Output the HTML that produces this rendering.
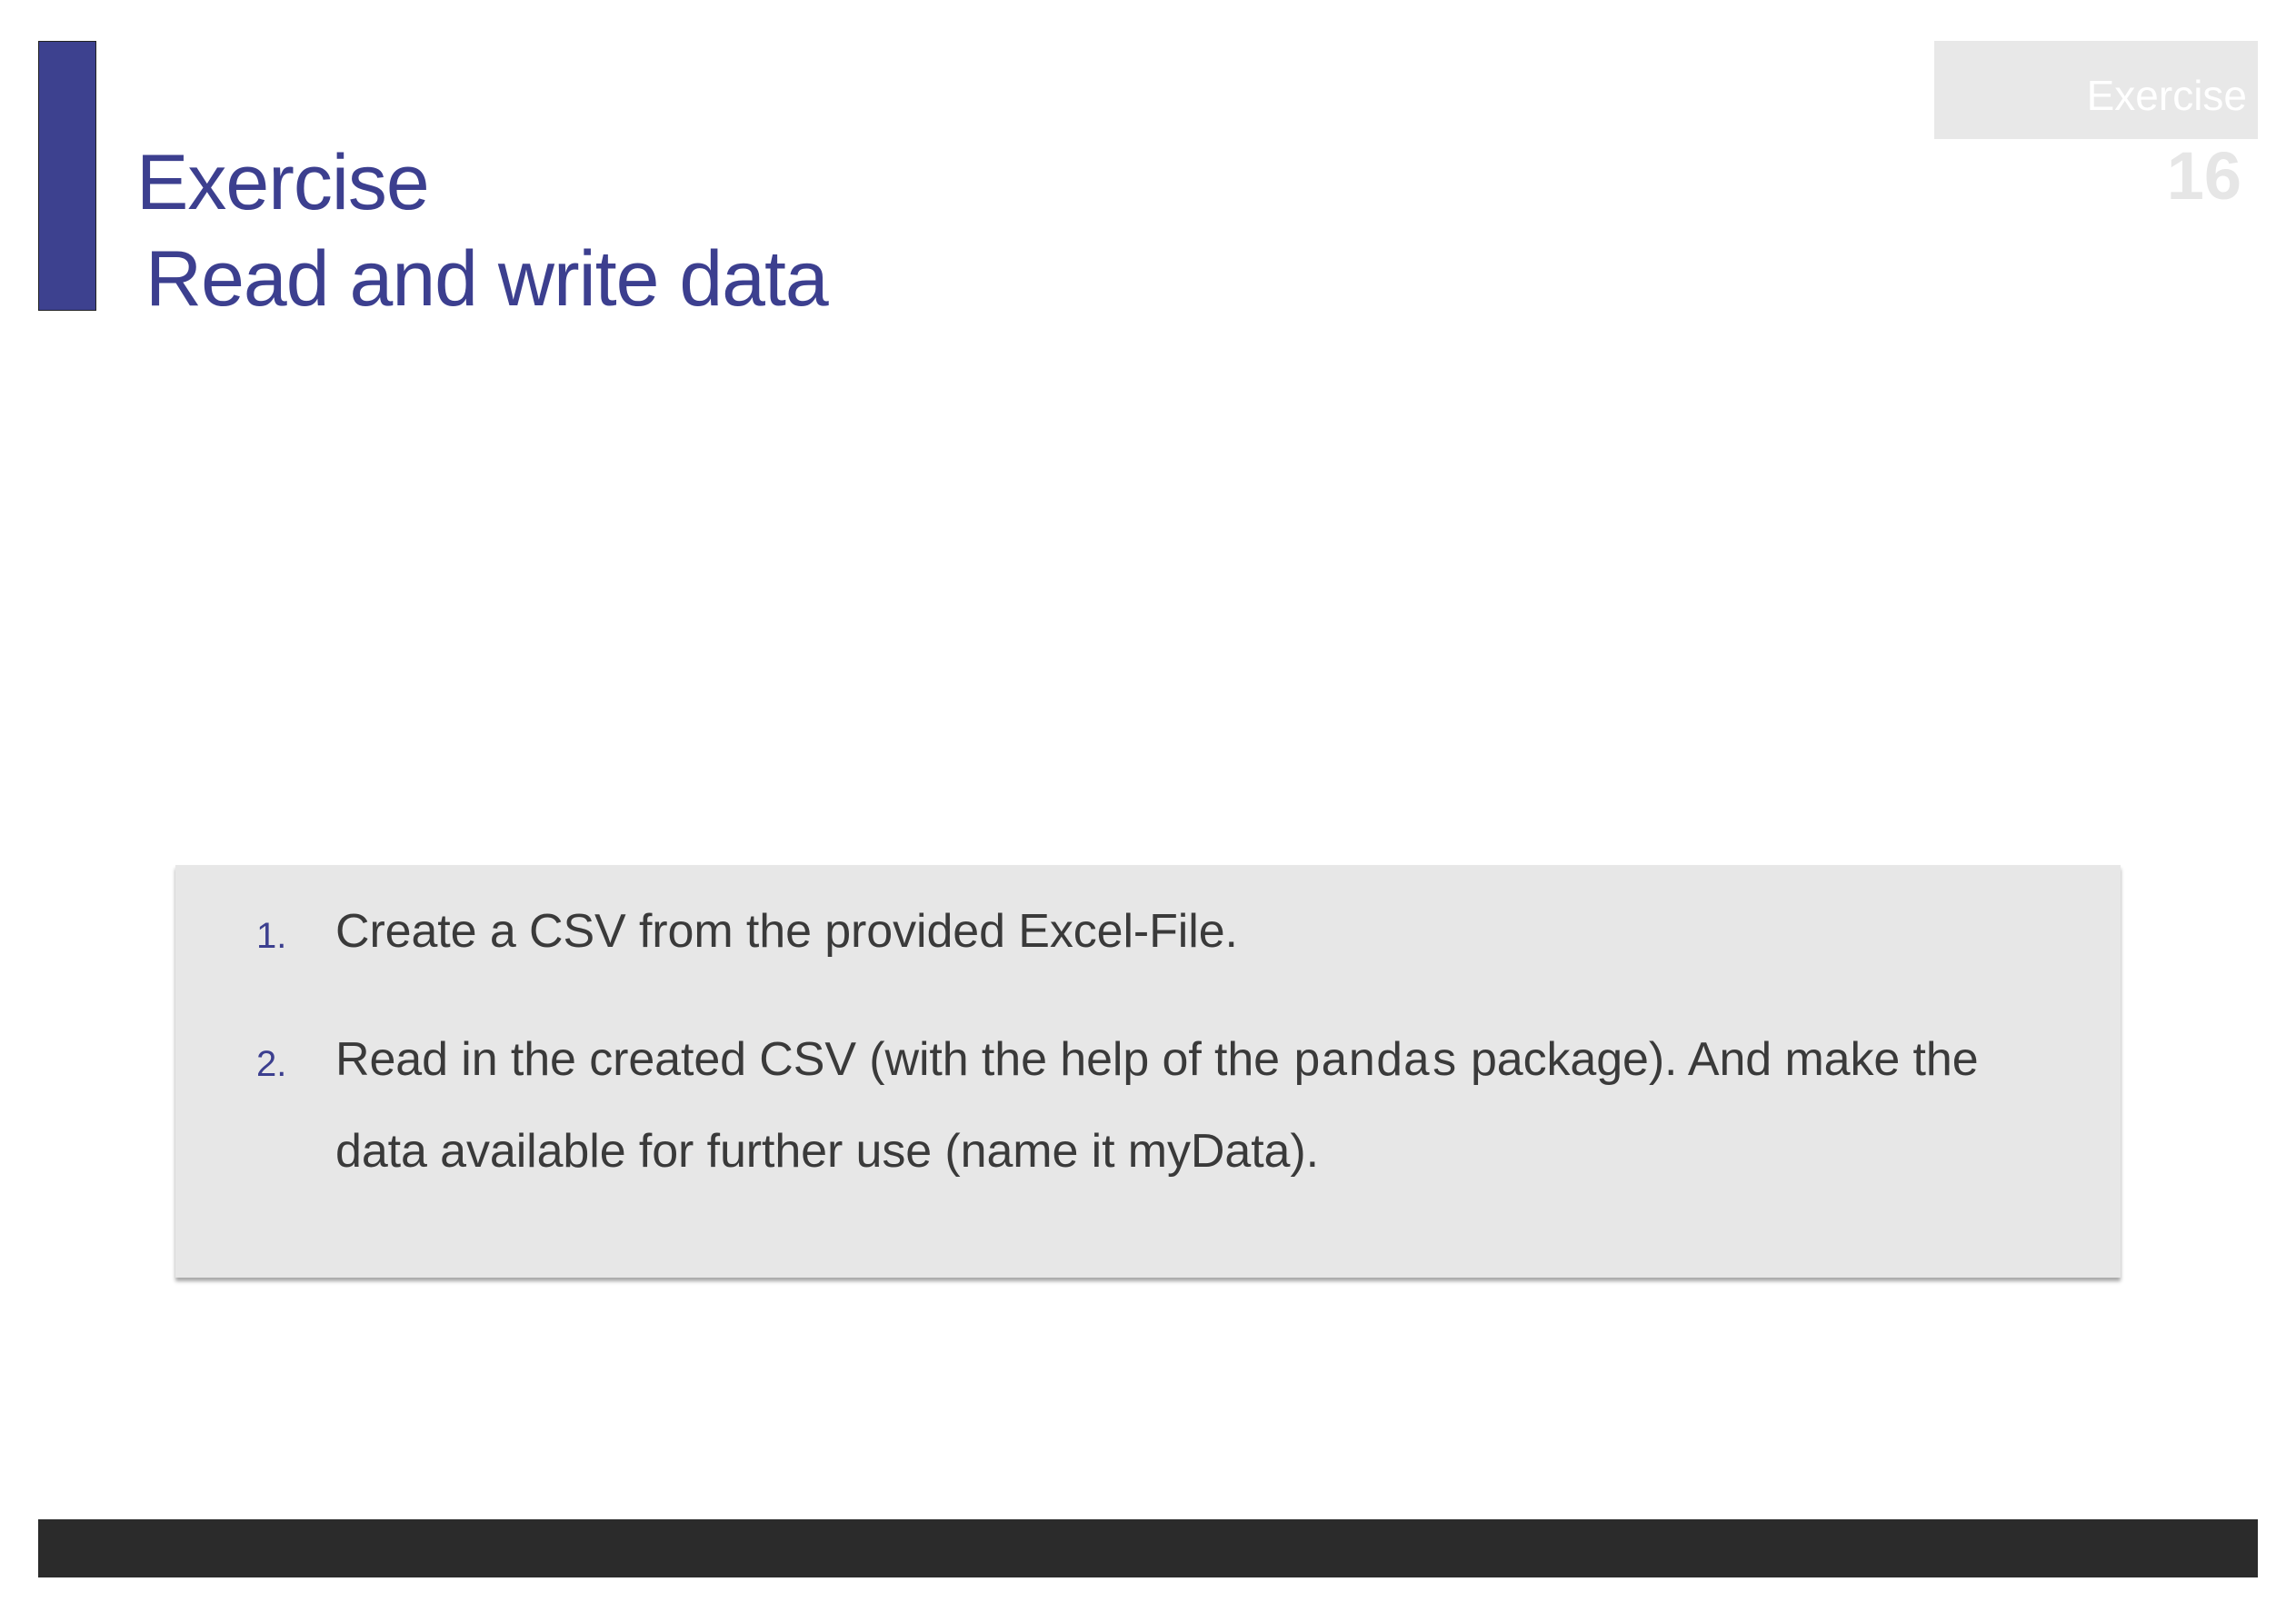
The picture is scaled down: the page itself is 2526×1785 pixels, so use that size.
<!DOCTYPE html>
<html><head><meta charset="utf-8"><style>
html,body{margin:0;padding:0;background:#fff;}
body{width:2526px;height:1785px;position:relative;overflow:hidden;font-family:"Liberation Sans",sans-serif;}
.a{position:absolute;white-space:nowrap;}
.t{color:#3c3f8f;font-size:86px;line-height:1;letter-spacing:-1px;}
.b{color:#3a3a3a;font-size:52px;line-height:1;letter-spacing:-0.1px;}
.n{color:#3c3f8f;font-size:40px;line-height:1;}
</style></head><body>
<div class="a" style="left:42px;top:45px;width:64px;height:297px;background:#3d418f;border:1px solid #222;box-sizing:border-box;"></div>
<div class="a t" style="left:150px;top:158px;">Exercise</div>
<div class="a t" style="left:160px;top:264px;">Read and write data</div>

<div class="a" style="left:2128px;top:45px;width:356px;height:108px;background:#e8e8e8;"></div>
<div class="a" style="right:54px;top:82px;color:#fff;font-size:46px;line-height:1;">Exercise</div>
<div class="a" style="right:60px;top:157px;color:#e6e6e6;font-size:74px;font-weight:bold;line-height:1;">16</div>

<div class="a" style="left:193px;top:952px;width:2140px;height:454px;background:#e7e7e7;box-shadow:0 4px 4px rgba(0,0,0,0.35);"></div>
<div class="a n" style="left:282px;top:1010px;">1.</div>
<div class="a b" style="left:369px;top:999px;">Create a CSV from the provided Excel-File.</div>
<div class="a n" style="left:282px;top:1151px;">2.</div>
<div class="a b" style="left:369px;top:1140px;">Read in the created CSV (with the help of the <span style="font-family:'Liberation Mono',monospace;letter-spacing:-1px;">pandas</span> package). And make the</div>
<div class="a b" style="left:369px;top:1241px;">data available for further use (name it myData).</div>

<div class="a" style="left:42px;top:1672px;width:2442px;height:64px;background:#2b2b2b;"></div>
</body></html>
